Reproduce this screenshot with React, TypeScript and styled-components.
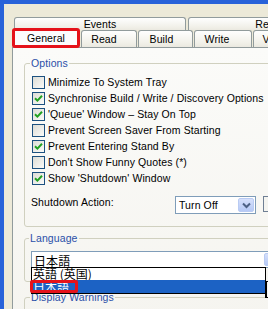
import React from "react";
import styled, { createGlobalStyle } from "styled-components";

const GlobalStyle = createGlobalStyle`
  html, body { margin: 0; padding: 0; background: #ECE9D8; }
  body {
    font-family: "Liberation Sans", Arial, sans-serif;
    font-size: 10.5px;
    letter-spacing: 0.1px;
    color: #000;
  }
  * { box-sizing: border-box; }
`;

const Screen = styled.div`
  width: 268px;
  height: 309px;
  overflow: hidden;
  background: #2862d9;
  padding: 4px 0 0 4px;
  display: flex;
`;

const Client = styled.div`
  flex: none;
  width: 300px;
  background: #ece9d8;
  padding: 13px 0 0 8px;
  display: flex;
  flex-direction: column;
`;

const TabRow = styled.div<{ $back?: boolean }>`
  display: flex;
  align-items: flex-end;
  height: ${(p) => (p.$back ? 15 : 17)}px;
  margin-left: ${(p) => (p.$back ? 2 : 0)}px;
  gap: ${(p) => (p.$back ? 2 : 1)}px;
`;

const Tab = styled.div<{ $w: number; $shift?: number }>`
  flex: none;
  width: ${(p) => p.$w}px;
  height: 100%;
  border: 1px solid #919b9c;
  border-bottom: none;
  border-radius: 3px 3px 0 0;
  background: linear-gradient(#fefefe, #f2f1ea 70%, #ebe9e0);
  display: flex;
  align-items: center;
  justify-content: center;
  padding-right: ${(p) => p.$shift ?? 0}px;
  line-height: 12px;
  white-space: nowrap;
`;

const ActiveTab = styled.div<{ $w: number }>`
  flex: none;
  position: relative;
  z-index: 1;
  width: ${(p) => p.$w}px;
  height: 20px;
  margin-bottom: -1px;
  border: 3px solid #e5121b;
  border-radius: 3px;
  background: #fcfcfe;
  display: flex;
  align-items: center;
  justify-content: center;
  line-height: 12px;
`;

const Panel = styled.div`
  flex: 1;
  border: 1px solid #919b9c;
  border-bottom: none;
  background: linear-gradient(#fbfbf9, #f5f4ef);
  padding: 9px 0 0 11px;
  display: flex;
  flex-direction: column;
`;

const Group = styled.fieldset<{ $pad: string; $mt?: number }>`
  margin: ${(p) => p.$mt ?? 0}px 0 0 0;
  padding: ${(p) => p.$pad};
  border: 1px solid #d0d0bf;
  border-radius: 3px;
  min-width: 0;
`;

const Legend = styled.legend`
  padding: 0 1px;
  margin-left: -2px;
  line-height: 12px;
  color: #2b4fa8;
`;

const CheckRow = styled.div`
  display: flex;
  align-items: center;
  height: 16px;
  white-space: nowrap;
`;

const Box = styled.span`
  flex: none;
  width: 13px;
  height: 13px;
  margin-right: 3px;
  border: 1px solid #1c5180;
  background: linear-gradient(135deg, #dcdcd5, #fbfbf9);
  display: flex;
  align-items: center;
  justify-content: center;
`;

const ActionRow = styled.div`
  display: flex;
  align-items: flex-start;
  margin-top: 10px;
  height: 18px;
`;

const ActionLabel = styled.span`
  flex: 0 0 144px;
  margin-left: -1px;
  line-height: 12px;
  white-space: nowrap;
`;

const Select = styled.div<{ $w: number; $h: number }>`
  flex: none;
  position: relative;
  width: ${(p) => p.$w}px;
  height: ${(p) => p.$h}px;
  border: 1px solid #7f9db9;
  background: #fff;
  display: flex;
  align-items: stretch;
  padding: 1px;
`;

const SelectText = styled.span<{ $cjk?: boolean }>`
  flex: 1;
  padding-left: ${(p) => (p.$cjk ? 1 : 2)}px;
  font-family: ${(p) =>
    p.$cjk
      ? '"Noto Sans CJK JP", "Liberation Sans", sans-serif'
      : '"Liberation Sans", Arial, sans-serif'};
  font-size: ${(p) => (p.$cjk ? 12 : 10.5)}px;
  line-height: ${(p) => (p.$cjk ? 13 : 12)}px;
  padding-top: 1px;
  white-space: nowrap;
`;

const DropButton = styled.span`
  flex: none;
  width: 16px;
  border: 1px solid #b9cbf3;
  border-radius: 2px;
  background: linear-gradient(#d6e0fb, #b6c9f5);
  display: flex;
  align-items: center;
  justify-content: center;
`;

const SideBox = styled.span`
  flex: none;
  width: 13px;
  height: 16px;
  margin-left: 7px;
  border: 1px solid #6f7f94;
  background: #f4f4f0;
`;

const List = styled.div`
  position: absolute;
  z-index: 2;
  top: 100%;
  left: -1px;
  width: 235px;
  border: 1px solid #000;
  background: #fff;
  font-family: "Noto Sans CJK JP", "Liberation Sans", sans-serif;
  font-size: 12px;
  letter-spacing: 0;
`;

const ListItem = styled.div<{ $sel?: boolean }>`
  position: relative;
  height: ${(p) => (p.$sel ? 13 : 12)}px;
  line-height: ${(p) => (p.$sel ? 13 : 12)}px;
  padding-left: 1px;
  white-space: nowrap;
  background: ${(p) => (p.$sel ? "#1c62c4" : "#fff")};
  color: ${(p) => (p.$sel ? "#fff" : "#000")};
`;

const Annotation = styled.span`
  position: absolute;
  left: -2px;
  top: 0;
  width: 48px;
  height: 13px;
  border: 3px solid #e5121b;
  border-radius: 2px;
`;

const CursorMark = styled.span`
  position: absolute;
  right: -4px;
  top: 13px;
  width: 4px;
  height: 17px;
  border: 2px solid #000;
  border-right: none;
  border-top-width: 1px;
  border-bottom-width: 1px;
`;

function CheckIcon() {
  return (
    <svg width="9" height="9" viewBox="0 0 9 9">
      <path d="M1 4.2 L3.4 6.6 L8 1.8" fill="none" stroke="#21a121" strokeWidth="2" />
    </svg>
  );
}

function Chevron() {
  return (
    <svg width="9" height="7" viewBox="0 0 9 7">
      <path d="M1 1.5 L4.5 5 L8 1.5" fill="none" stroke="#4d6185" strokeWidth="2" />
    </svg>
  );
}

const options: { label: string; checked: boolean }[] = [
  { label: "Minimize To System Tray", checked: false },
  { label: "Synchronise Build / Write / Discovery Options", checked: true },
  { label: "'Queue' Window – Stay On Top", checked: true },
  { label: "Prevent Screen Saver From Starting", checked: false },
  { label: "Prevent Entering Stand By", checked: true },
  { label: "Don't Show Funny Quotes (*)", checked: false },
  { label: "Show 'Shutdown' Window", checked: true },
];

export default function App() {
  return (
    <>
      <GlobalStyle />
      <Screen>
        <Client>
          <TabRow $back>
            <Tab $w={172}>Events</Tab>
            <Tab $w={174}>Registry</Tab>
          </TabRow>
          <TabRow>
            <ActiveTab $w={68}>General</ActiveTab>
            <Tab $w={56} $shift={10}>Read</Tab>
            <Tab $w={55} $shift={8}>Build</Tab>
            <Tab $w={58} $shift={12}>Write</Tab>
            <Tab $w={46}>Verify</Tab>
          </TabRow>
          <Panel>
            <Group $pad="5px 0 12px 7px">
              <Legend>Options</Legend>
              {options.map((o) => (
                <CheckRow key={o.label}>
                  <Box>{o.checked && <CheckIcon />}</Box>
                  {o.label}
                </CheckRow>
              ))}
              <ActionRow>
                <ActionLabel>Shutdown Action:</ActionLabel>
                <Select $w={81} $h={18}>
                  <SelectText>Turn Off</SelectText>
                  <DropButton>
                    <Chevron />
                  </DropButton>
                </Select>
                <SideBox />
              </ActionRow>
            </Group>
            <Group $pad="7px 0 13px 6px" $mt={5}>
              <Legend>Language</Legend>
              <Select $w={251} $h={17}>
                <SelectText $cjk>日本語</SelectText>
                <DropButton>
                  <Chevron />
                </DropButton>
                <List>
                  <ListItem>英語 (英国)</ListItem>
                  <ListItem $sel>
                    日本語
                    <Annotation />
                  </ListItem>
                  <CursorMark />
                </List>
              </Select>
            </Group>
            <Group $pad="4px 0 20px 7px" $mt={9}>
              <Legend>Display Warnings</Legend>
            </Group>
          </Panel>
        </Client>
      </Screen>
    </>
  );
}
